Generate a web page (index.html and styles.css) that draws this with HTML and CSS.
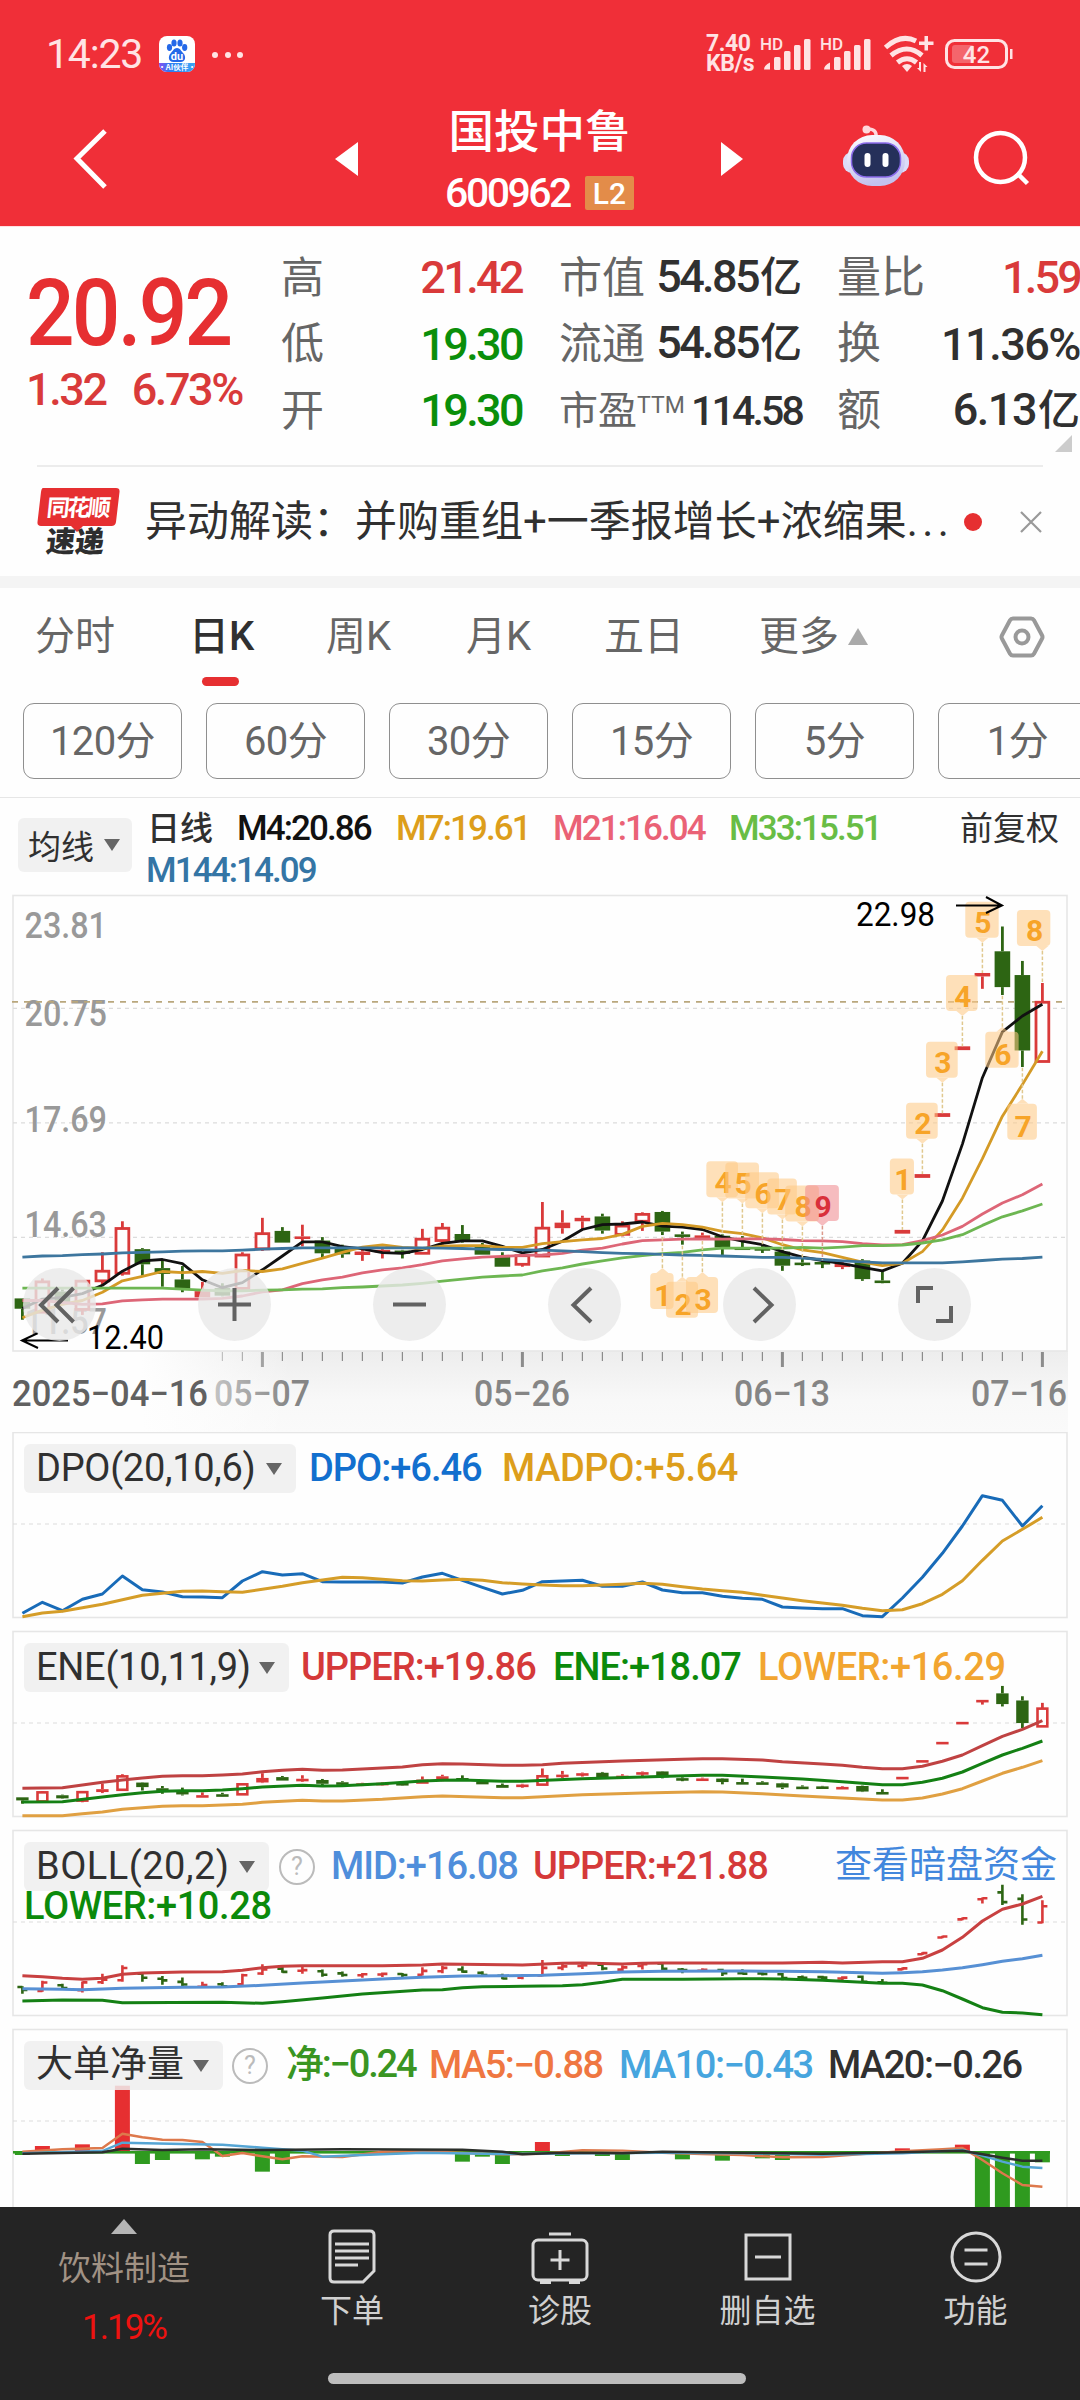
FILE: index.html
```html
<!DOCTYPE html>
<html lang="zh-CN">
<head>
<meta charset="utf-8">
<title>国投中鲁 600962</title>
<link rel="stylesheet" href="styles.css">
</head>
<body>
<header class="top">
  <div class="status">
    <span class="clock">14:23</span>
    <svg class="baidu" width="36" height="36" viewBox="0 0 36 36">
      <defs><clipPath id="app"><rect width="36" height="36" rx="8"/></clipPath>
      <linearGradient id="strip"><stop offset="0" stop-color="#8a4df0"/><stop offset=".3" stop-color="#2f7bf2"/><stop offset="1" stop-color="#38a6f5"/></linearGradient></defs>
      <g clip-path="url(#app)"><rect width="36" height="36" fill="#fff"/><rect y="27" width="36" height="9" fill="url(#strip)"/></g>
      <g fill="#2468e8"><ellipse cx="10.500" cy="11.500" rx="2.600" ry="3.400"/><ellipse cx="15" cy="7" rx="2.600" ry="3.500"/><ellipse cx="21" cy="7" rx="2.600" ry="3.500"/><ellipse cx="25.700" cy="11.500" rx="2.600" ry="3.400"/><path d="M18 12c3 0 4 3 6.500 5.500 2.500 2.600 2.500 8.500-3 8.500h-7c-5.500 0-5.500-6-3-8.500C14 15 15 12 18 12z"/></g>
      <text x="18" y="24" class="du" text-anchor="middle">du</text>
      <text x="18" y="34.200" class="ai" text-anchor="middle">·AI伙伴·</text>
    </svg>
    <span class="dots"><i></i><i></i><i></i></span>
    <span class="speed">7.40<br>KB/s</span>
    <svg class="signals" width="256" height="44" viewBox="760 32 256 44" fill="#ffe3e4">
      <text x="760" y="50" class="hd">HD</text>
      <path d="M764 69.500h6v-7q-6 3-6 7z"/><rect x="774" y="57" width="6.500" height="13" rx="1.500"/><rect x="784" y="51" width="6.500" height="19" rx="1.500"/><rect x="794" y="45" width="6.500" height="25" rx="1.500"/><rect x="804" y="39" width="6.500" height="31" rx="1.500"/>
      <text x="820" y="50" class="hd">HD</text>
      <path d="M824 69.500h6v-7q-6 3-6 7z"/><rect x="834" y="57" width="6.500" height="13" rx="1.500"/><rect x="844" y="51" width="6.500" height="19" rx="1.500"/><rect x="854" y="45" width="6.500" height="25" rx="1.500"/><rect x="864" y="39" width="6.500" height="31" rx="1.500"/>
      <g fill="none" stroke="#ffe3e4" stroke-width="5"><path d="M885.500 47.500Q901 33.500 916 41"/><path d="M891 55.500Q907 42.500 922 55.500"/><path d="M897.500 62.500Q907 55 916.500 62.500"/></g>
      <path d="M902 66q5-4 10 0l-5 6z"/><path d="M924.500 36h3.500v5.500h5.500V45H928v5.500h-3.500V45H919v-3.500h5.500z"/><path d="M919 62h2v10l-4-4h2zM923.500 72v-9l4 4h-2v5z"/>
      <rect x="946.500" y="40.500" width="60" height="27" rx="8" fill="none" stroke="#ffe3e4" stroke-width="3"/><rect x="952" y="45" width="22" height="18" rx="3" opacity=".3"/><path d="M1010 49h2.500v10h-2.500z"/>
      <text x="976.500" y="63" class="bat" text-anchor="middle">42</text>
    </svg>
  </div>
  <div class="titlebar">
    <svg class="back" width="34" height="62" viewBox="0 0 34 62"><path d="M31 3 3 30.500 31 59" fill="none" stroke="#fff" stroke-width="5"/></svg>
    <svg class="prev" width="23" height="34" viewBox="0 0 23 34"><path d="M23 0v34L0 17z" fill="#fff"/></svg>
    <div class="stock"><h1>国投中鲁</h1><div class="code"><span>600962</span><b>L2</b></div></div>
    <svg class="next" width="22" height="34" viewBox="0 0 22 34"><path d="M0 0v34l22-17z" fill="#fff"/></svg>
    <svg class="robot" width="68" height="62" viewBox="0 0 68 62">
      <defs><linearGradient id="head" x2="0.300" y2="1"><stop offset="0" stop-color="#fff"/><stop offset="1" stop-color="#c3c2ee"/></linearGradient></defs>
      <path d="M34 12q1-8-8-8" fill="none" stroke="#ffd8dc" stroke-width="3.500"/><circle cx="24.500" cy="4.500" r="4" fill="#ffd8dc"/>
      <rect x="1" y="27" width="66" height="21" rx="9" fill="#dcdcf8"/>
      <rect x="5" y="10" width="58" height="51" rx="25" fill="url(#head)"/>
      <rect x="9.500" y="18" width="49" height="34" rx="15" fill="#25305a" stroke="#8a6bea" stroke-width="1.500"/>
      <rect x="22.500" y="28" width="6" height="14" rx="3" fill="#fff"/><rect x="40.500" y="28" width="6" height="14" rx="3" fill="#fff"/>
    </svg>
    <svg class="search" width="58" height="56" viewBox="0 0 58 56"><g fill="none" stroke="#fff" stroke-width="4.500"><circle cx="27.500" cy="27.500" r="24.500"/><path d="M44 43 54.500 53.500"/></g></svg>
  </div>
</header>

<section class="quote">
  <div class="price"><div class="now">20.92</div><div class="chg"><span>1.32</span><span>6.73%</span></div></div>
  <dl class="stats">
    <div><dt>高</dt><dd class="up">21.42</dd></div><div><dt>低</dt><dd class="down">19.30</dd></div><div><dt>开</dt><dd class="down">19.30</dd></div>
  </dl>
  <dl class="stats">
    <div><dt>市值</dt><dd>54.85<em>亿</em></dd></div><div><dt>流通</dt><dd>54.85<em>亿</em></dd></div><div class="pe"><dt>市盈<sup>TTM</sup></dt><dd>114.58</dd></div>
  </dl>
  <dl class="stats wide">
    <div><dt>量比</dt><dd class="up">1.59</dd></div><div><dt>换</dt><dd>11.36%</dd></div><div><dt>额</dt><dd>6.13<em>亿</em></dd></div>
  </dl>
  <i class="corner"></i>
</section>

<section class="news">
  <svg class="brand" width="84" height="68" viewBox="0 0 84 68">
    <path d="M6 1h73q4 0 3.500 4L79 35q-.6 4-4.600 4H46l-6 6-6-6H4q-4 0-3.500-4L4 5q.6-4 2-4z" fill="#e62f31"/>
    <text x="9" y="29" class="b1" textLength="64" transform="skewX(-6) translate(3)">同花顺</text>
    <text x="9" y="65" class="b2" textLength="58" transform="skewX(-6) translate(6)">速递</text>
  </svg>
  <span class="headline">异动解读：并购重组+一季报增长+浓缩果<em>...</em></span>
  <i class="dot"></i>
  <svg width="24" height="24" viewBox="0 0 24 24"><path d="M2 2l20 20M22 2 2 22" stroke="#999" stroke-width="2.200"/></svg>
</section>

<nav class="tabs">
  <span>分时</span><span class="on">日K</span><span>周K</span><span>月K</span><span>五日</span><span>更多<i></i></span>
  <svg width="46" height="42" viewBox="0 0 46 42" fill="none" stroke="#999" stroke-width="4"><path d="M14 2.500h18q2 0 3 1.800l8 14.900q1 1.800 0 3.600l-8 14.900q-1 1.800-3 1.800H14q-2 0-3-1.800L3 22.800q-1-1.800 0-3.600l8-14.900q1-1.800 3-1.800z"/><circle cx="23" cy="21" r="6.500"/></svg>
</nav>
<div class="pills"><span>120分</span><span>60分</span><span>30分</span><span>15分</span><span>5分</span><span>1分</span></div>

<div class="ma">
  <span class="chip">均线<i></i></span>
  <div class="ma-values"><span class="ink">日线</span><span class="black">M4:20.86</span><span class="gold">M7:19.61</span><span class="pink">M21:16.04</span><span class="lime">M33:15.51</span><span class="adj">前复权</span><span class="steel">M144:14.09</span></div>
</div>

<section class="kline">
  <svg id="kline" width="1080" height="537" viewBox="0 0 1080 537"></svg>
  <div class="tools">
    <button><svg viewBox="0 0 73 73"><path d="M35 20 18 37l17 17M50.500 20l-17 17 17 17"/></svg></button>
    <button><svg viewBox="0 0 73 73"><path d="M20 36.500h33M36.500 20v33"/></svg></button>
    <button><svg viewBox="0 0 73 73"><path d="M20 36.500h33"/></svg></button>
    <button><svg viewBox="0 0 73 73"><path d="M43 20 25.500 37 43 54"/></svg></button>
    <button><svg viewBox="0 0 73 73"><path d="M31 20 48.500 37 31 54"/></svg></button>
    <button><svg viewBox="0 0 73 73"><path d="M20 35V20h15M53 38v15H38"/></svg></button>
  </div>
</section>

<main class="panels">
  <section class="panel">
    <svg id="dpo" width="1080" height="187"></svg>
    <div class="legend l-dpo"><span class="chip">DPO(20,10,6)<i></i></span><span class="blue">DPO:+6.46</span><span class="gold">MADPO:+5.64</span></div>
  </section>
  <section class="panel">
    <svg id="ene" width="1080" height="187"></svg>
    <div class="legend l-ene"><span class="chip">ENE(10,11,9)<i></i></span><span class="red">UPPER:+19.86</span><span class="green">ENE:+18.07</span><span class="orange">LOWER:+16.29</span></div>
  </section>
  <section class="panel">
    <svg id="boll" width="1080" height="187"></svg>
    <div class="legend l-boll"><span class="chip">BOLL(20,2)<i></i></span><span class="help">?</span><span class="sky">MID:+16.08</span><span class="red">UPPER:+21.88</span><span class="link">查看暗盘资金</span></div>
    <div class="lower green">LOWER:+10.28</div>
  </section>
  <section class="panel">
    <svg id="net" width="1080" height="187"></svg>
    <div class="legend l-net"><span class="chip"><em>大单净量</em><i></i></span><span class="help">?</span><span class="leaf">净:−0.24</span><span class="coral">MA5:−0.88</span><span class="cyan">MA10:−0.43</span><span class="ink">MA20:−0.26</span></div>
  </section>
</main>

<footer class="bottom">
  <div class="items">
    <div class="sector"><i></i><span>饮料制造</span><b>1.19%</b></div>
    <div><svg width="50" height="56" viewBox="0 0 50 56"><path d="M7 2h36q4 0 4 4v36L36 53H7q-4 0-4-4V6q0-4 4-4z"/><path d="M8 15h34M8 22h34M8 29h34M8 36h23"/></svg><span>下单</span></div>
    <div><svg width="58" height="56" viewBox="0 0 58 56"><rect x="2" y="11" width="54" height="40" rx="5"/><path d="M18 5h22M29 21v20M19.500 31h19M9 53.500h11M38 53.500h11"/></svg><span>诊股</span></div>
    <div><svg width="50" height="56" viewBox="0 0 50 56"><rect x="3" y="6" width="44" height="44"/><path d="M12 28h26"/></svg><span>删自选</span></div>
    <div><svg width="54" height="56" viewBox="0 0 54 56"><circle cx="27" cy="28" r="24"/><path d="M15.500 21h23M15.500 35h23"/></svg><span>功能</span></div>
  </div>
  <i class="home"></i>
</footer>
<script src="charts.js"></script>
</body>
</html>
```
FILE: styles.css
```css
* { box-sizing: border-box; margin: 0; padding: 0; }
body { width: 1080px; height: 2400px; overflow: hidden; display: flex; flex-direction: column; background: #fefefe; color: #303030; font-family: Roboto, "Noto Sans CJK SC", sans-serif; }
i, em { font-style: normal; }
svg { display: block; flex: none; overflow: visible; }
span { white-space: nowrap; }
section, header, nav, footer, .pills, .ma { flex: none; }

.top { height: 226px; background: #f02f38; color: #fff; }
.status { height: 108px; padding-left: 46px; display: flex; align-items: center; color: #ffe3e4; }
.clock { width: 113px; font-size: 41px; letter-spacing: -1.200px; }
.du { font: bold 11px Roboto; fill: #fff; }
.ai { font: bold 7.500px "Noto Sans CJK SC"; fill: #fff; }
.dots { display: flex; gap: 6.500px; margin-left: 17px; width: 494px; padding-top: 1px; }
.dots i { width: 6px; height: 6px; border-radius: 50%; background: #ffe3e4; }
.speed { width: 54px; font: bold 23px/20px Roboto, sans-serif; letter-spacing: -.4px; }
.hd { font: 500 17px Roboto; }
.bat { font: 500 24px Roboto; }
.titlebar { height: 118px; display: grid; grid-template-columns: 260px 98px 363px 121px 131px 107px; align-items: center; }
.back { margin: -16px 0 0 74px; }
.prev { justify-self: end; margin-top: -16px; }
.next { margin-top: -16px; }
.robot { margin-top: -22px; }
.search { margin-top: -18px; }
.stock { text-align: center; height: 118px; }
.stock h1 { font: 500 45.500px/64px "Noto Sans CJK SC", sans-serif; margin: -12px 0 0 0; }
.code { display: flex; justify-content: center; align-items: center; gap: 15px; height: 34px; margin-top: 16px; }
.code span { font-size: 41px; letter-spacing: -2.500px; font-weight: 500; }
.code b { width: 49px; height: 34px; border-radius: 2px; background: #e38c49; font: 500 30px/35px Roboto; }

.quote { position: relative; height: 239px; padding: 16px 0 0 27px; display: grid; grid-template-columns: 254px 241px 37px 243px 35px 243px; border-top: 1px solid #ffe0e2; }
.quote > .stats:nth-child(2) { grid-column: 2; }
.quote > .stats:nth-child(3) { grid-column: 4; }
.quote > .stats:nth-child(4) { grid-column: 6; }
.price { color: #e62f31; }
.now { font: 500 93px/92px Roboto; letter-spacing: -3px; margin: 25px 0 0 -1px; transform: scaleX(.92); transform-origin: 0 0; }
.chg { display: flex; gap: 26px; font: 500 45px/54px Roboto; letter-spacing: -2.400px; margin: 3px 0 0 -1px; color: #d93a3a; }
.stats div { height: 66.500px; display: flex; justify-content: space-between; align-items: center; }
.stats dt { font-size: 43px; color: #666; white-space: nowrap; margin-top: -5px; }
.stats dd { font-size: 45px; font-weight: 500; letter-spacing: -2.600px; white-space: nowrap; margin-top: 3px; }
.stats em { font-size: 42px; line-height: 50px; letter-spacing: 0; margin-left: 2px; }
.stats dd:has(em) { margin-top: 0; }
.stats .up { color: #d93a3a; }
.stats .down { color: #0a8f0a; }
.wide dt { font-size: 44px; }
.wide dd { letter-spacing: -1.500px; }
.wide .up { letter-spacing: -2.800px; }
.stats .pe dt { font-size: 39px; }
.stats .pe dd { font-size: 41px; letter-spacing: -2.800px; }
.pe sup { font-size: 23px; vertical-align: 11px; line-height: 0; }
.corner { position: absolute; right: 8px; bottom: 13px; border-left: 17px solid transparent; border-bottom: 17px solid #ccc; }

.news { height: 111px; margin: 0 37px; border-top: 2px solid #ececec; display: flex; align-items: center; }
.brand { margin-top: -1px; }
.b1 { font: bold 23px "Noto Sans CJK SC"; fill: #fff; }
.b2 { font: 900 29px "Noto Sans CJK SC"; fill: #2e2e2e; }
.headline { width: 839px; padding-left: 24px; font-size: 42px; line-height: 60px; }
.headline em { letter-spacing: 4.500px; }
.dot { width: 18px; height: 18px; border-radius: 50%; background: #e62f31; margin: 0 37px 0 4px; flex: none; }

.tabs { height: 127px; border-top: 12px solid #f4f4f4; display: grid; grid-template-columns: 154px 137px 140px 138px 155px 240px 46px; padding-left: 35px; color: #666; font-size: 40px; }
.tabs span { position: relative; line-height: 98px; }
.tabs .on { color: #303030; font-weight: 500; }
.tabs .on::after { content: ""; position: absolute; left: 13px; top: 89px; width: 37px; height: 9px; border-radius: 5px; background: #e62f31; }
.tabs span i { display: inline-block; margin-left: 9px; vertical-align: 5px; border: 10px solid transparent; border-top: 0; border-bottom: 17px solid #aaa; }
.tabs svg { margin: 28px 0 0 0; }
.pills { height: 95px; padding-left: 23px; display: flex; gap: 24px; overflow: hidden; border-bottom: 1px solid #e6e6e6; }
.pills span { flex: none; width: 159px; height: 76px; border: 1px solid #8f8f8f; border-radius: 11px; text-align: center; font-size: 40px; line-height: 75px; color: #666; letter-spacing: -.6px; }

.chip { background: rgba(238,238,238,.85); border-radius: 6px; color: #303030; display: flex; align-items: center; justify-content: space-between; }
.chip i { border: 8.500px solid transparent; border-bottom: 0; border-top: 12px solid #666; }
.ma { height: 97px; padding-left: 18px; display: flex; }
.ma .chip { width: 114px; height: 54px; margin-top: 20px; padding: 0 12px 0 10px; font-size: 33px; }
.ma-values { margin: 10px 0 0 15px; display: grid; grid-template-columns: 90px 159px 157px 176px 232px 100px; grid-template-rows: 42px 42px; font-size: 35px; line-height: 42px; letter-spacing: -1.900px; font-weight: 500; }
.ma-values .ink, .ma-values .adj { font-size: 33px; letter-spacing: 0; }
.ma-values .adj { font-weight: 400; margin-left: -1px; }
.ma-values .steel { grid-column: 1 / 4; margin-left: -1px; }
.ink { color: #303030; } .black { color: #111; } .gold { color: #dd9e1b; } .pink { color: #ea6276; }
.lime { color: #68bd45; } .steel { color: #3475a5; } .blue { color: #126fce; } .red { color: #d53939; }
.green { color: #0b8a0b; } .orange { color: #f2a530; } .sky { color: #4f8edb; } .link { color: #4287dd; }
.leaf { color: #399522; } .coral { color: #ef7741; } .cyan { color: #46a5de; }

.kline { position: relative; height: 537px; }
.tools { position: absolute; left: 23px; top: 373px; display: flex; gap: 102px; }
.tools button { width: 73px; height: 73px; border: 0; border-radius: 50%; background: rgba(232,232,232,.8); }
.tools path { fill: none; stroke: #626262; stroke-width: 4; }
.scale { font: 500 36px Roboto; fill: #999; }
.date { font: 500 36px Roboto; fill: #858585; }
.first { fill: #616161; }
.callout { font: 400 33px Roboto; fill: #000; }
.mark { font: 700 30px Roboto; fill: #f7a428; }
.hot { fill: #d92f3a; }

.panels { flex: 1; overflow: hidden; display: flex; flex-direction: column; gap: 12px; }
.panel { position: relative; height: 187px; flex: none; }
.legend { position: absolute; left: 24px; top: 11px; height: 49px; display: grid; align-items: center; font-size: 38px; line-height: 51px; font-weight: 400; }
.legend > span, .lower { letter-spacing: -1px; font-weight: 500; }
.legend .chip { height: 49px; padding: 0 14px 0 12px; font-weight: 400; letter-spacing: -.3px; }
.l-dpo { grid-template-columns: 285px 193px auto; }
.l-ene { grid-template-columns: 277px 252px 205px auto; }
.l-boll { grid-template-columns: 255px 52px 202px 302px auto; }
.legend.l-dpo .gold, .panel .lower, .legend .orange { letter-spacing: -.4px; }
.l-boll .link { font-size: 37px; letter-spacing: 0; font-weight: 400; margin-top: -2px; }
.l-net { grid-template-columns: 208px 54px 143px 190px 209px auto; }
.legend.l-net > span { margin-top: 0; letter-spacing: -1.500px; }
.legend.l-net > .chip, .legend.l-net > .help { letter-spacing: 0; }
.legend.l-net .leaf { letter-spacing: -2.200px; margin-top: -2px; }
.l-dpo .chip { width: 272px; } .l-ene .chip { width: 265px; }
.legend.l-boll .chip { width: 245px; letter-spacing: .5px; }
.l-net .chip { width: 199px; font-size: 37px; }
.l-net .chip em { margin-top: -2px; }
.legend .help { width: 36px; height: 36px; border: 2px solid #bbb; border-radius: 50%; color: #bbb; font-size: 25px; font-weight: 400; line-height: 32px; text-align: center; letter-spacing: 0; }
.lower { position: absolute; left: 24px; top: 54px; font-size: 38px; line-height: 45px; }

.bottom { height: 193px; background: #242424; color: #d0d0d0; position: relative; }
.items { display: grid; grid-template-columns: 248px 208px 208px 207px 209px; text-align: center; font-size: 32px; }
.items div { display: flex; flex-direction: column; align-items: center; padding-top: 22px; }
.items svg { fill: none; stroke: #d8d8d8; stroke-width: 3; }
.items span { line-height: 44px; margin-top: 4px; }
.items .sector { padding-top: 12px; color: #a19284; }
.sector i { border: 13px solid transparent; border-top: 0; border-bottom: 15px solid #b5b5b5; }
.items .sector span { margin-top: 13px; font-size: 33px; }
.sector b { font: 400 35px/40px Roboto; color: #ee1210; letter-spacing: -2px; margin-top: 17px; }
.home { position: absolute; left: 328px; top: 166px; width: 418px; height: 11px; border-radius: 6px; background: #bdbdbd; }
```
FILE: charts.js
```javascript
const NS = 'http://www.w3.org/2000/svg';
const X = i => 22.4 + i * 20;

function add(svg, tag, attrs, text) {
  const el = document.createElementNS(NS, tag);
  for (const k in attrs) el.setAttribute(k, attrs[k]);
  if (text !== undefined) el.textContent = text;
  svg.appendChild(el);
  return el;
}

// "index:value index:value ..." -> polyline
function line(svg, data, y, color, width = 2.8) {
  const pts = data.trim().split(/\s+/).map(p => {
    const [i, v] = p.split(':').map(Number);
    return X(i).toFixed(1) + ',' + y(v).toFixed(1);
  });
  add(svg, 'polyline', { points: pts.join(' '), fill: 'none', stroke: color, 'stroke-width': width, 'stroke-linejoin': 'round' });
}
const seq = (...v) => v.map((n, i) => i + ':' + n).join(' ');

function frame(svg, height, grids) {
  add(svg, 'rect', { x: 13, y: 0.5, width: 1054, height, fill: '#fefefe', stroke: '#e6e6e6', 'stroke-width': 1.6 });
  grids.forEach(g => add(svg, 'line', { x1: 13, x2: 1066, y1: g, y2: g, stroke: '#dcdcdc', 'stroke-width': 1.2, 'stroke-dasharray': '4 4' }));
}

// kind, high, body top, body bottom, low
const candles = [
  ['g',1186,1186,1216,1248],['r',1128,1138,1226,1226],['g',1160,1166,1196,1200],['r',1136,1136,1218,1234],
  ['r',1052,1107,1135,1145],['r',962,983,1113,1120],['g',1040,1043,1087,1120],['g',1076,1098,1115,1152],
  ['g',1092,1131,1158,1168],['f',1138,1165,1183,1183],['g',1142,1156,1178,1180],['r',1052,1060,1157,1160],
  ['r',952,998,1042,1048],['g',979,990,1024,1024],['f',972,1006,1012,1035],['g',1008,1018,1055,1068],
  ['g',1030,1040,1058,1068],['f',1045,1050,1060,1077],['f',1040,1045,1052,1070],['g',1045,1047,1057,1070],
  ['r',984,1014,1055,1055],['r',967,982,1018,1030],['g',973,999,1022,1024],['g',1025,1035,1059,1059],
  ['g',1052,1066,1094,1094],['r',1055,1062,1087,1094],['r',906,982,1063,1063],['f',930,966,982,998],
  ['f',946,952,962,985],['g',940,948,989,998],['r',962,976,1000,1006],['r',936,942,962,990],
  ['g',932,935,992,1002],['g',992,1000,1006,1030],['f',995,1003,1012,1014],['g',1000,1004,1038,1060],
  ['g',1005,1038,1043,1043],['g',1030,1040,1045,1054],['g',1045,1050,1091,1106],['g',1070,1082,1087,1092],
  ['g',1075,1080,1085,1098],['f',1078,1085,1095,1101],['g',1072,1076,1130,1135],['g',1108,1134,1140,1142],
  ['f',987,987,998,998],['f',825,825,836,836],['f',648,648,659,659],['f',454,454,465,465],
  ['f',241,241,251,287],['g',106,178,282,305],['g',206,247,466,514],['r',270,326,498,498]
];

function drawCandles(svg, y, half, stroke) {
  candles.forEach(([k, h, t, b, l], i) => {
    const c = k === 'g' ? '#2d6513' : '#d93a3a', x = X(i);
    add(svg, 'line', { x1: x, x2: x, y1: y(h), y2: y(t), stroke: c, 'stroke-width': 2.8 });
    add(svg, 'line', { x1: x, x2: x, y1: y(b), y2: y(l), stroke: c, 'stroke-width': 2.8 });
    const bh = Math.max(y(b) - y(t), 2.6);
    const hollow = k === 'r' && bh > 5;
    add(svg, 'rect', hollow
      ? { x: x - half + stroke / 2, y: y(t), width: 2 * half - stroke, height: bh, fill: '#fefefe', stroke: c, 'stroke-width': stroke }
      : { x: x - half, y: y(t), width: 2 * half, height: bh, fill: c });
  });
}

/* ---- main chart ---- */
(function () {
  const s = document.getElementById('kline'), y = v => v / 2.904 - 5;
  const defs = add(s, 'defs', {});
  defs.innerHTML = '<linearGradient id="fadeX"><stop offset="0" stop-color="#fefefe"/><stop offset=".13" stop-color="#fefefe"/><stop offset=".27" stop-color="#fefefe" stop-opacity="0"/></linearGradient>' +
    '<linearGradient id="axisBg" x2="0" y2="1"><stop offset="0" stop-color="#ededed"/><stop offset=".6" stop-color="#f8f8f8"/><stop offset="1" stop-color="#fafafa"/></linearGradient>';
  add(s, 'rect', { x: 13, y: 456, width: 1055, height: 81, fill: 'url(#axisBg)' });
  for (let i = 10; i < 52; i++) {
    const big = [12, 25, 38, 51].includes(i);
    add(s, 'line', { x1: X(i), x2: X(i), y1: 457, y2: big ? 472 : 466, stroke: '#8c8c8c', 'stroke-width': big ? 3 : 1.2 });
  }
  [[214, 96, '05-07'], [474, 96, '05-26'], [734, 96, '06-13'], [971, 96, '07-16']].forEach(([x, w, t]) =>
    add(s, 'text', { x, y: 511, class: 'date', textLength: w, lengthAdjust: 'spacingAndGlyphs' }, t.replace('-', '−')));
  add(s, 'rect', { x: 0, y: 456, width: 1080, height: 81, fill: 'url(#fadeX)' });
  add(s, 'text', { x: 12, y: 511, class: 'date first', textLength: 196, lengthAdjust: 'spacingAndGlyphs' }, '2025−04−16');

  frame(s, 455.5, [344, 676, 1009].map(y));
  [['23.81', 138], ['20.75', 394], ['17.69', 702], ['14.63', 1007], ['11.57', 1288]].forEach(([t, v]) =>
    add(s, 'text', { x: 24.5, y: y(v) + .5, class: 'scale', textLength: 82.5, lengthAdjust: 'spacingAndGlyphs' }, t));
  add(s, 'line', { x1: 12, x2: 1066, y1: y(325), y2: y(325), stroke: '#b9a77c', 'stroke-width': 1.8, 'stroke-dasharray': '6 6' });
  drawCandles(s, y, 7.8, 2.8);

  line(s, seq(1215,1188,1183,1172,1148,1107,1077,1073,1085,1132,1155,1140,1103,1063,1022,1022,1036,1042,1053,1055,1044,1026,1019,1019,1035,1054,1044,1020,986,972,970,964,976,979,986,1007,1020,1030,1050,1066,1076,1085,1096,1106,1084,1019,903,738,545,412,366,332), y, '#111');
  line(s, seq(1242,1220,1203,1192,1168,1135,1122,1108,1111,1108,1113,1105,1108,1100,1084,1069,1052,1037,1031,1038,1041,1034,1033,1033,1038,1038,1027,1021,1016,1012,1000,977,968,972,979,991,998,1010,1030,1045,1053,1067,1081,1091,1084,1050,987,895,780,657,565,468), y, '#d49a26');
  line(s, seq(1192,1192,1198,1203,1202,1193,1190,1188,1188,1188,1186,1179,1167,1161,1143,1132,1124,1112,1103,1097,1088,1077,1071,1066,1064,1061,1060,1055,1046,1040,1028,1018,1016,1014,1013,1014,1013,1013,1015,1018,1019,1021,1027,1031,1030,1018,1002,977,941,909,885,854), y, '#dd6677');
  line(s, seq(1156,1156,1156,1156,1156,1156,1156,1156,1159,1162,1164,1164,1162,1161,1159,1158,1155,1153,1150,1147,1142,1136,1130,1124,1121,1118,1106,1097,1086,1077,1068,1062,1056,1052,1045,1040,1040,1040,1040,1038,1040,1037,1033,1033,1031,1025,1016,1001,974,949,932,912), y, '#6db652');
  line(s, seq(1066,1063,1062,1059,1057,1054,1052,1051,1049,1048,1048,1046,1043,1041,1039,1039,1039,1039,1039,1039,1039,1040,1041,1043,1044,1045,1046,1048,1050,1053,1055,1056,1058,1060,1061,1063,1065,1067,1067,1069,1073,1077,1080,1083,1083,1083,1083,1080,1076,1072,1070,1066), y, '#3d769e');

  // sequence badges: candle, label, top, left, width, down-pointing tip?, anchor
  [[32,'1',1112,320,68,0,1002],[33,'2',1138,366,93,0,1030],[34,'3',1124,424,93,0,1014],
   [35,'4',788,483,92,1,1000],[36,'5',791,538,98,1,1005],[37,'6',820,596,98,1,1030],[38,'7',838,660,86,1,1045],[39,'8',858,712,98,1,1070],[40,'9',857,770,98,1,1075],
   [44,'1',780,1016,70,1,987],[45,'2',618,1063,92,1,825],[46,'3',441,1121,92,1,648],[47,'4',247,1179,92,1,454],[48,'5',34,1235,97,1,241],
   [49,'6',412,1293,97,0,305],[50,'7',621,1357,86,0,514],[51,'8',58,1385,97,1,270]
  ].forEach(([i, t, top, left, w, down, anchor]) => {
    const hot = t === '9', x = 540 + left / 2.904, y0 = y(top), ww = w / 2.904, h = 36, cx = X(i);
    const fill = hot ? '#f08a8f' : '#ffca85';
    const tip = down ? y0 + h + 5 : y0 - 5;
    add(s, 'line', { x1: cx, x2: cx, y1: tip, y2: y(anchor), stroke: hot ? '#dc9a8c' : '#e0c88e', 'stroke-width': 1.5, 'stroke-dasharray': '3.500 2' });
    const base = down ? y0 + h : y0, d = down ? 5 : -5;
    const g = add(s, 'g', { fill, opacity: .56 });
    add(g, 'rect', { x, y: y0, width: ww, height: h, rx: 4 });
    add(g, 'path', { d: `M${cx - 6} ${base}h12l-6 ${d}z` });
    add(s, 'text', { x: x + ww / 2 + 1, y: y0 + (down ? 31.5 : 33), class: 'mark' + (hot ? ' hot' : ''), 'text-anchor': 'middle' }, t);
  });

  add(s, 'path', { d: 'M22 445.500H68M38 438 22 445.500 38 453', fill: 'none', stroke: '#000', 'stroke-width': 2 });
  add(s, 'text', { x: 87, y: 454, class: 'callout', textLength: 77, lengthAdjust: 'spacingAndGlyphs' }, '12.40');
  add(s, 'path', { d: 'M956 10.500H1002M986 2 1002 10.500 986 18', fill: 'none', stroke: '#000', 'stroke-width': 2 });
  add(s, 'text', { x: 856, y: 31, class: 'callout', textLength: 79, lengthAdjust: 'spacingAndGlyphs' }, '22.98');
})();

/* ---- DPO ---- */
(function () {
  const s = document.getElementById('dpo'), y = v => v / 3 - 12;
  frame(s, 185, [92]);
  line(s, seq(580,547,572,538,522,468,509,516,530,531,533,483,455,465,461,485,486,486,486,489,471,460,481,502,522,511,485,483,481,499,499,486,510,518,518,529,535,538,561,564,566,566,587,590,534,472,400,318,227,241,318,257), y, '#186bb8', 3);
  line(s, seq(590,579,574,563,553,539,526,520,514,513,515,517,508,499,488,480,472,473,478,482,483,480,478,481,488,492,495,497,497,495,493,490,493,500,507,512,517,526,534,542,549,556,565,572,569,551,523,482,421,363,328,292), y, '#d59d28', 3);
})();

/* ---- ENE ---- */
(function () {
  const s = document.getElementById('ene'), y = v => v / 3 - 211;
  frame(s, 185, [92]);
  drawCandles(s, v => y(765 + .3094 * v), 6.2, 2.6);
  line(s, '0:1105 2:1103 4:1087 5:1080 6:1074 7:1069 8:1067 9:1067 10:1065 11:1062 12:1055 13:1051 14:1048 15:1051 16:1050 18:1044 19:1041 20:1034 21:1031 22:1032 24:1036 25:1036 26:1034 27:1030 30:1023 33:1018 34:1016 35:1016 37:1020 38:1025 40:1032 41:1036 42:1042 43:1046 44:1046 45:1039 46:1024 47:1005 48:977 49:949 50:928 51:902', y, '#bf4242', 3);
  line(s, '0:1146 2:1145 4:1131 5:1124 6:1118 7:1114 8:1112 9:1112 10:1110 11:1106 12:1101 14:1096 15:1098 16:1097 18:1091 20:1083 21:1081 22:1080 24:1084 25:1084 28:1076 31:1071 34:1066 35:1066 37:1071 39:1077 41:1085 42:1090 43:1094 44:1094 45:1087 46:1075 47:1056 48:1030 49:1005 50:985 51:963', y, '#148014', 3);
  line(s, '0:1187 2:1187 3:1181 4:1176 5:1168 6:1163 7:1159 8:1157 9:1157 11:1153 12:1147 14:1141 15:1143 16:1143 18:1138 20:1130 21:1128 24:1133 25:1133 28:1124 31:1119 34:1115 35:1116 37:1121 39:1128 41:1134 43:1140 44:1140 45:1134 46:1122 47:1106 48:1083 49:1060 50:1042 51:1022', y, '#e0a042', 3);
})();

/* ---- BOLL ---- */
(function () {
  const s = document.getElementById('boll'), y = v => v / 3 - 10, p = v => y(167 + .2818 * v);
  frame(s, 185, [92]);
  candles.forEach(([k, h, t, b, l], i) => {
    const x = X(i), g = k === 'g', c = g ? '#2d6513' : '#d93a3a';
    add(s, 'path', { d: `M${x} ${p(h) - .8}V${p(l) + .8}M${x - 5} ${p(g ? t : b)}h5M${x} ${p(g ? b : t)}h5`, stroke: c, 'stroke-width': 2.6, fill: 'none' });
  });
  line(s, '0:467 1:470 2:475 3:478 4:475 5:463 6:459 8:456 10:455 11:451 12:443 13:439 14:437 18:437 20:435 21:432 24:434 25:435 27:430 28:429 30:432 31:430 32:429 38:429 40:427 41:429 43:425 44:425 45:415 46:390 47:352 48:303 49:268 50:252 51:229', y, '#c84040', 3);
  line(s, '0:506 2:508 3:509 5:505 8:502 10:501 12:496 14:489 16:483 18:477 20:472 22:468 24:467 26:466 28:461 30:456 32:454 36:453 38:454 40:455 43:460 44:458 45:455 46:450 47:443 48:434 49:424 50:416 51:406', y, '#5790d4', 3);
  line(s, '0:543 2:540 4:541 5:548 10:547 12:550 13:545 15:534 17:522 20:510 21:509 22:503 23:500 25:499 27:497 28:494 29:487 30:478 33:478 36:476 38:477 40:481 42:487 43:490 44:490 45:495 46:512 47:537 48:563 49:577 50:579 51:584', y, '#148014', 3);
})();

/* ---- large-order net volume ---- */
(function () {
  const s = document.getElementById('net'), y = v => v / 3 - 209;
  frame(s, 190, [92]);
  add(s, 'rect', { x: 13, y: y(993), width: 1037, height: 2.6, fill: '#2f9a1f' });
  const bars = { 0:1005, 1:-978, 3:-973, 5:-797, 6:1032, 7:1020, 9:1018, 10:1010, 12:1055, 13:1032, 22:1025, 23:1010, 24:1032, 26:-966, 27:1008, 29:1008, 30:1020, 33:1018, 35:1022, 37:1015, 38:1020, 44:-985, 47:-974, 48:1200, 49:1200, 50:1200, 51:1027 };
  for (const i in bars) {
    const v = bars[i], up = v < 0, a = up ? -v : 993, b = up ? 993 : v;
    add(s, 'rect', { x: X(+i) - 7.5, y: y(a), width: 15, height: (b - a) / 3, fill: up ? '#e62f31' : '#2f9a1f' });
  }
  line(s, '0:995 2:988 4:984 5:941 6:952 7:959 8:960 9:966 10:1008 11:999 12:1009 13:1018 14:1009 16:1011 18:995 20:993 22:999 24:1003 26:1001 28:991 30:992 32:998 34:1002 36:1005 38:1012 40:1011 42:1002 44:994 46:988 47:984 48:1020 49:1060 50:1095 51:1100', y, '#dd794c', 2.4);
  line(s, '0:1000 4:993 5:968 8:972 10:974 12:983 14:992 15:1010 17:1005 20:998 24:1002 28:1000 32:998 36:1000 40:1004 44:1000 47:990 48:1007 49:1025 50:1040 51:1044', y, '#55a5d4', 2.4);
  line(s, '0:1001 4:997 5:986 7:990 9:988 12:990 16:988 22:989 24:995 25:1003 27:998 30:1000 32:995 36:998 40:1001 44:997 47:992 48:1003 49:1013 50:1022 51:1022', y, '#2b2f2b', 2.6);
})();
```
